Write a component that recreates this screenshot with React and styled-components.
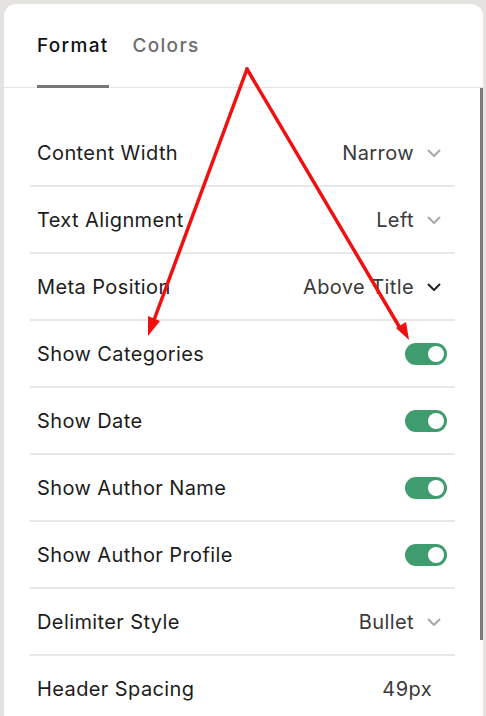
import React from 'react'
import styled, { createGlobalStyle } from 'styled-components'

const Global = createGlobalStyle`
  html, body { margin: 0; padding: 0; background: #e4e3df; }
  body { font-family: Inter, "Noto Sans", sans-serif; overflow: hidden; }
`

const Page = styled.div`
  position: relative;
  height: 716px;
  padding: 4px 3px 0 4px;
  box-sizing: border-box;
`

const Card = styled.div`
  position: relative;
  background: #fff;
  border-radius: 12px 12px 0 0;
  height: 740px;
  overflow: hidden;
`

const Tabs = styled.div`
  display: flex;
  gap: 24px;
  padding: 0 33px;
  height: 83px;
  border-bottom: 1px solid #e4e4e4;
`

const Tab = styled.div`
  display: flex;
  align-items: flex-start;
  padding-top: 30px;
  font-size: 19px;
  letter-spacing: 1.3px;
  font-weight: 500;
  color: ${p => (p.active ? '#111' : '#6e6e6e')};
  border-bottom: 3px solid ${p => (p.active ? '#777' : 'transparent')};
  margin-bottom: -1px;
`

const Scroll = styled.div`
  position: absolute;
  right: 0;
  top: 84px;
  width: 3px;
  height: 552px;
  background: #7a7a7a;
`

const List = styled.div`
  padding: 32px 28px 0 26px;
`

const Row = styled.div`
  display: flex;
  align-items: center;
  justify-content: space-between;
  height: 65px;
  padding: 0 8px 0 7px;
  border-bottom: 2px solid #e8e8e8;
  font-size: 20px;
  letter-spacing: 0.4px;
  color: #1c1c1c;
  &:last-child { border-bottom: none; }
`

const Value = styled.div`
  display: flex;
  align-items: center;
  gap: 13px;
  color: #3a3a3a;
  padding-right: ${p => p.pad || 0}px;
`

const Toggle = styled.div`
  width: 42px;
  height: 22px;
  border-radius: 11px;
  background: #3f9c6f;
  position: relative;
  &::after {
    content: '';
    position: absolute;
    right: 3px;
    top: 3px;
    width: 16px;
    height: 16px;
    border-radius: 50%;
    background: #fff;
  }
`

const Overlay = styled.svg`
  position: absolute;
  left: 0;
  top: 0;
  pointer-events: none;
`

const Chevron = ({ dark }) => (
  <svg width="14" height="8" viewBox="0 0 14 8">
    <path d="M1 1l6 6 6-6" fill="none" stroke={dark ? '#222' : '#a8a8a8'} strokeWidth="2" />
  </svg>
)

const rows = [
  { label: 'Content Width', value: 'Narrow' },
  { label: 'Text Alignment', value: 'Left' },
  { label: 'Meta Position', value: 'Above Title', dark: true },
  { label: 'Show Categories', toggle: true },
  { label: 'Show Date', toggle: true },
  { label: 'Show Author Name', toggle: true },
  { label: 'Show Author Profile', toggle: true },
  { label: 'Delimiter Style', value: 'Bullet' },
  { label: 'Header Spacing', plain: '49px' },
]

export default function App() {
  return (
    <Page>
      <Global />
      <Card>
        <Tabs>
          <Tab active>Format</Tab>
          <Tab>Colors</Tab>
        </Tabs>
        <Scroll />
        <List>
          {rows.map(r => (
            <Row key={r.label}>
              <span>{r.label}</span>
              {r.toggle && <Toggle />}
              {r.value && (
                <Value pad={6}>
                  {r.value}
                  <Chevron dark={r.dark} />
                </Value>
              )}
              {r.plain && <Value pad={15}>{r.plain}</Value>}
            </Row>
          ))}
        </List>
      </Card>
      <Overlay width="486" height="716">
        <g stroke="#f01010" strokeWidth="3.5" fill="none" strokeLinecap="round">
          <line x1="247" y1="69" x2="154" y2="320" />
          <line x1="247" y1="69" x2="400" y2="328" />
        </g>
        <g fill="#f01010">
          <polygon points="148,336 148,316 160,321" />
          <polygon points="409,340 396,328 406,322" />
        </g>
      </Overlay>
    </Page>
  )
}
